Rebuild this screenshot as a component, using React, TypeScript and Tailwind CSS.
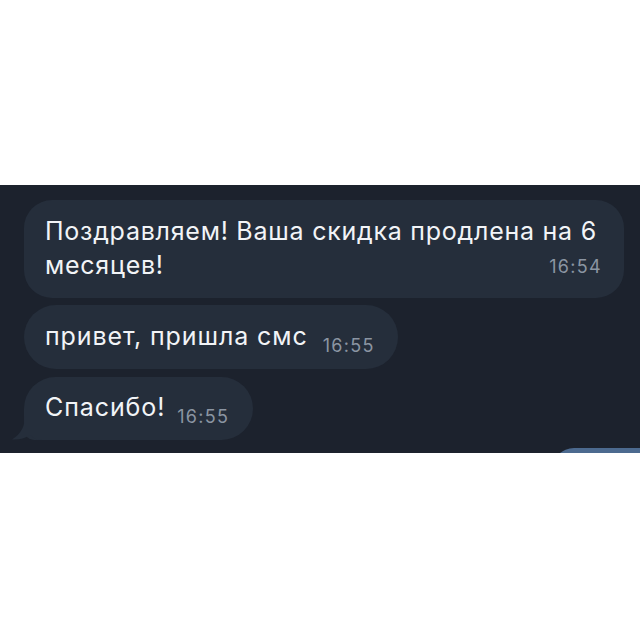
import React from "react";

const font = { fontFamily: "Inter, 'Noto Sans', sans-serif" };

function Time({ t }: { t: string }) {
  return (
    <span className="text-[18px] leading-none text-[#8b95a2] align-[-7px] tracking-[1.3px]">{t}</span>
  );
}

export default function App() {
  return (
    <div className="w-[640px] h-[640px] bg-white flex flex-col" style={font}>
      <div className="h-[185px] shrink-0" />
      <div className="h-[268px] shrink-0 bg-[#1c222d] relative overflow-hidden flex flex-col gap-[7px] pt-[15px] pl-[24px]">
        <div className="w-[600px] h-[98px] bg-[#252e3b] rounded-[28px] pl-[21px] pr-[22px] pt-[14px] flex flex-col text-[#f2f4f7]">
          <div className="text-[25px] leading-[34px] tracking-[0.75px] whitespace-nowrap">
            Поздравляем! Ваша скидка продлена на 6
            <br />
            месяцев!
          </div>
          <div className="self-end -mt-[25px] text-[18px] leading-[20px] tracking-[1.3px] text-[#8b95a2]">16:54</div>
        </div>
        <div className="self-start h-[64px] bg-[#252e3b] rounded-[32px] pl-[21px] pr-[23px] pt-[14px] text-[#f2f4f7] whitespace-nowrap">
          <span className="text-[25px] leading-[34px] tracking-[0.9px] mr-[15px]">привет, пришла смс</span>
          <Time t="16:55" />
        </div>
        <div className="self-start relative mt-[1px] h-[63px] bg-[#252e3b] rounded-[32px] rounded-bl-[10px] pl-[21px] pr-[24px] pt-[13px] text-[#f2f4f7] whitespace-nowrap">
          <svg className="absolute left-[-12px] bottom-0" width="30" height="24" viewBox="0 0 30 24">
            <path d="M13 0 C13 10 9 18 0 23.5 C8 24 14 22 18 19 C21 22 25 24 30 24 L30 0 Z" fill="#252e3b" />
          </svg>
          <span className="relative text-[25px] leading-[34px] tracking-[0.9px] mr-[12px]">Спасибо!</span>
          <span className="relative"><Time t="16:55" /></span>
        </div>
        <div className="absolute left-[552px] top-[263px] w-[120px] h-[30px] bg-[#4c6a8f] rounded-tl-[22px]" />
      </div>
      <div className="flex-1" />
    </div>
  );
}
